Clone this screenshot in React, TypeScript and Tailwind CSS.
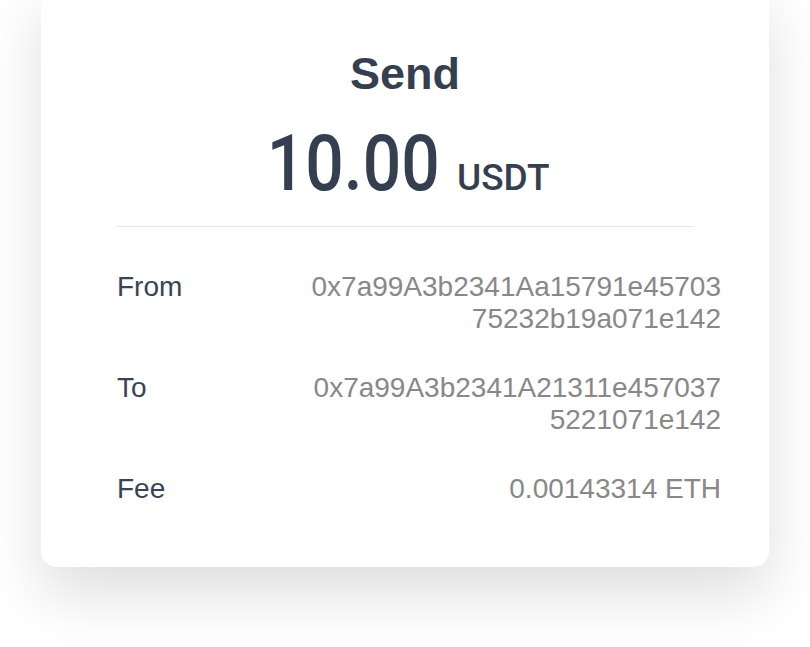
const rows = [
  { label: "From", value: "0x7a99A3b2341Aa15791e4570375232b19a071e142" },
  { label: "To", value: "0x7a99A3b2341A21311e4570375221071e142" },
  { label: "Fee", value: "0.00143314 ETH" },
];

const App = () => {
  return (
    <div className="min-h-[647px] bg-white overflow-hidden font-['Liberation_Sans',Arial,sans-serif]">
      <div className="mx-auto -mt-5 w-[728px] rounded-2xl bg-white pt-[68px] pb-[62px] shadow-[0_28px_60px_rgba(0,0,0,0.13)]">
        <h1 className="text-center text-[45px] leading-[52px] font-bold text-[#363f50]">Send</h1>

        <div className="mt-6 flex h-[80px] items-baseline justify-center pl-[6px] text-[#363f50] font-['Roboto',sans-serif]">
          <span className="-mx-3 inline-block scale-x-[0.88] text-[77px] leading-[80px] font-medium">10.00</span>
          <span className="ml-[18px] text-[37px] leading-[40px] font-medium">USDT</span>
        </div>

        <div className="mx-[75px] mt-[22px] h-px bg-[#e8e8ea]" />

        <div className="mt-[44px] flex flex-col gap-[37px] pl-[76px] pr-[48px]">
          {rows.map((r) => (
            <div key={r.label} className="flex justify-between text-[28px] leading-[32px]">
              <span className="text-[#3a4356]">{r.label}</span>
              <span className="w-[416px] text-right break-all text-[#888888]">{r.value}</span>
            </div>
          ))}
        </div>
      </div>
    </div>
  );
};

export default App;
